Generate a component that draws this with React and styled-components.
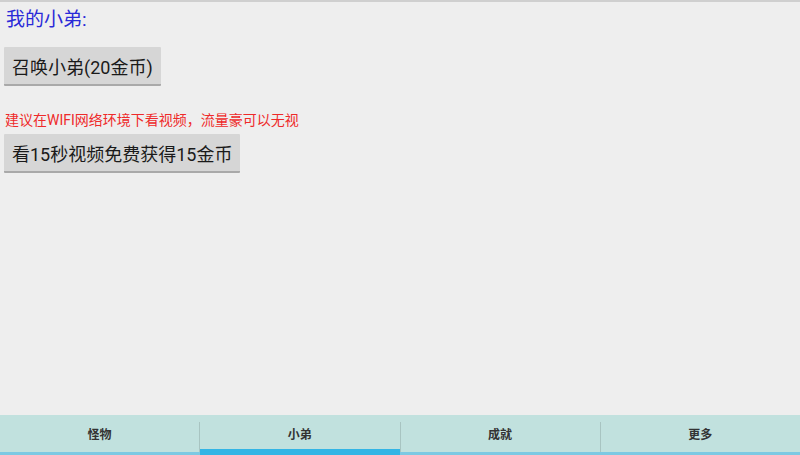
import React from "react";
import styled, { createGlobalStyle } from "styled-components";

const Global = createGlobalStyle`
  html, body { margin: 0; padding: 0; }
  body { background: #eeeeee; font-family: Roboto, "Noto Sans CJK SC", sans-serif; }
`;

const Screen = styled.div`
  width: 800px;
  height: 455px;
  display: flex;
  flex-direction: column;
  background: #eeeeee;
  border-top: 2px solid #cfcfcf;
  box-sizing: border-box;
`;

const Content = styled.div`
  flex: 1;
  display: flex;
  flex-direction: column;
  align-items: flex-start;
  padding: 6px 0 0 4px;
`;

const Title = styled.div`
  color: #2a2ad8;
  font-size: 19px;
  line-height: 24px;
  margin-left: 2px;
`;

const Button = styled.button`
  font-family: Roboto, "Noto Sans CJK SC", sans-serif;
  font-size: 18px;
  color: #1a1a1a;
  background: #d6d6d6;
  border: none;
  border-bottom: 2px solid #a9a9a9;
  border-radius: 1px;
  height: 39px;
  padding: 0 8px;
  margin-top: ${(p) => p.$mt}px;
  box-sizing: border-box;
`;

const Warn = styled.div`
  color: #ee2a2a;
  font-size: 14px;
  line-height: 17px;
  margin-top: 26px;
  margin-left: 1px;
  font-family: Roboto, "Noto Sans CJK SC", sans-serif;
`;

const TabBar = styled.div`
  height: 40px;
  display: flex;
  background: #c1e1de;
  border-bottom: 3px solid #7cc9e3;
  box-sizing: border-box;
`;

const Tab = styled.div`
  flex: 1;
  position: relative;
  display: flex;
  align-items: center;
  justify-content: center;
  font-size: 12px;
  font-weight: bold;
  color: #333;
  margin-top: 7px;
  padding-bottom: 7px;
  & + & {
    border-left: 1px solid #a8c4c1;
  }
`;

const Indicator = styled.div`
  position: absolute;
  left: 0;
  right: 0;
  bottom: -3px;
  height: 6px;
  background: #33b5e5;
`;

export default function App() {
  const tabs = ["怪物", "小弟", "成就", "更多"];
  return (
    <>
      <Global />
      <Screen>
        <Content>
          <Title>我的小弟:</Title>
          <Button $mt={15}>召唤小弟(20金币)</Button>
          <Warn>建议在WIFI网络环境下看视频&#xFF0C;流量豪可以无视</Warn>
          <Button $mt={5}>看15秒视频免费获得15金币</Button>
        </Content>
        <TabBar>
          {tabs.map((t, i) => (
            <Tab key={t}>
              {t}
              {i === 1 && <Indicator />}
            </Tab>
          ))}
        </TabBar>
      </Screen>
    </>
  );
}
